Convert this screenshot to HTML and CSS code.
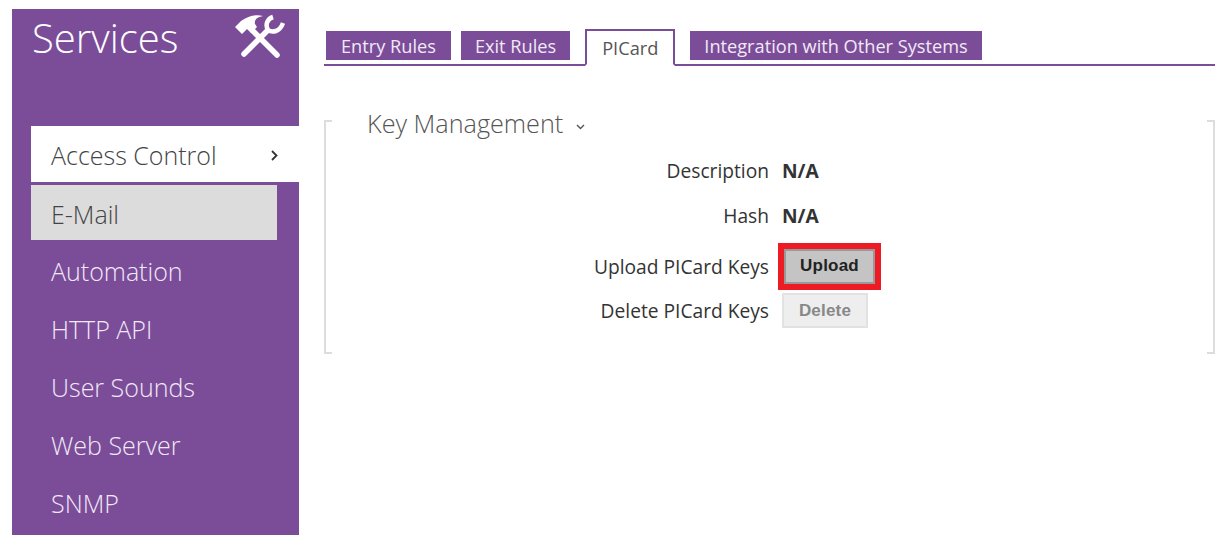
FILE: index.html
```html
<!DOCTYPE html>
<html lang="en">
<head>
  <meta charset="UTF-8" />
  <title>Services - PICard</title>
  <link rel="stylesheet" href="styles.css">
</head>
<body>

<div class="page">
  <aside class="sidebar">
    <div class="side-head">
      <h1>Services</h1>
      <svg class="tools" viewBox="-1 0 50 44" width="50" height="44">
        <path d="M8 40 L31 17" fill="none" stroke="#fff" stroke-width="5.5" stroke-linecap="round"/>
        <path d="M37 3 C31 5 29 11 32 16 C36 19 44 18 47 9" fill="none" stroke="#fff" stroke-width="4.5"/>
        <path d="M17 17 L41 41" fill="none" stroke="#fff" stroke-width="5.5" stroke-linecap="round"/>
        <path d="M-1 13 L5 7 C12 2 20 0 27 2 C21 3 18 6 19 10 L21 13 L15 19 L11 15 L6 20 Z" fill="#fff"/>
      </svg>
    </div>
    <nav class="side-nav">
      <a href="#" class="current">Access Control
        <svg class="chev-right" viewBox="0 0 7 11" width="7" height="11"><path d="M1 1 L5.5 5.5 L1 10" fill="none" stroke="#333" stroke-width="1.8"/></svg>
      </a>
      <a href="#" class="hover">E-Mail</a>
      <a href="#">Automation</a>
      <a href="#">HTTP API</a>
      <a href="#">User Sounds</a>
      <a href="#">Web Server</a>
      <a href="#">SNMP</a>
    </nav>
  </aside>

  <main class="content">
    <div class="tabs">
      <a href="#" class="tab">Entry Rules</a>
      <a href="#" class="tab tight">Exit Rules</a>
      <a href="#" class="tab active">PICard</a>
      <a href="#" class="tab tight">Integration with Other Systems</a>
    </div>

    <section class="panel">
      <h2>Key Management
        <svg class="chev-down" viewBox="0 0 9 6" width="9" height="6"><path d="M1 1 L4.5 4.5 L8 1" fill="none" stroke="#555" stroke-width="1.4"/></svg>
      </h2>
      <div class="field"><label>Description</label><strong>N/A</strong></div>
      <div class="field hash"><label>Hash</label><strong>N/A</strong></div>
      <div class="field upload">
        <label>Upload PICard Keys</label>
        <span class="highlight"><button class="btn">Upload</button></span>
      </div>
      <div class="field"><label>Delete PICard Keys</label><button class="btn disabled">Delete</button></div>
    </section>
  </main>
</div>

</body>
</html>
```

FILE: styles.css
```css
html, body {
  height: 100%;
}
body {
  font-family: 'Open Sans', 'Noto Sans', sans-serif;
  margin: 0;
  background: white;
  color: #333;
  overflow: hidden;
}
.page {
  display: flex;
  padding: 9px 0 0 12px;
}
.sidebar {
  width: 287px;
  height: 526px;
  flex: none;
  background: #7b4d99;
  color: #f1e9f5;
}
.side-head {
  display: flex;
  justify-content: space-between;
  height: 117px;
  padding: 0 14px 0 20px;
}
.side-head h1 {
  margin: 0;
  font-size: 40px;
  font-weight: 300;
  line-height: 58px;
  color: white;
}
.tools {
  margin-top: 5px;
}
.side-nav {
  display: flex;
  flex-direction: column;
  padding-left: 19px;
}
.side-nav a {
  display: flex;
  align-items: center;
  justify-content: space-between;
  height: 58px;
  padding: 0 21px 0 20px;
  color: inherit;
  text-decoration: none;
  font-size: 25px;
  font-weight: 300;
}
.side-nav a.current {
  height: 54px;
  padding-top: 2px;
  background: white;
  color: #444;
  margin-bottom: 3px;
}
.side-nav a.hover {
  height: 53px;
  width: 226px;
  padding-top: 2px;
  padding-right: 0;
  background: #dcdcdc;
  color: #444;
  margin-bottom: 2px;
}
.content {
  flex: 1;
  padding: 20px 16px 0 25px;
}
.tabs {
  display: flex;
  align-items: flex-end;
  height: 35px;
  padding-left: 2px;
  border-bottom: 2px solid #7b4d99;
}
.tab {
  display: flex;
  align-items: center;
  height: 29px;
  margin: 0 10px 4px 0;
  padding: 0 15px;
  background: #7b4d99;
  color: #f1e9f5;
  text-decoration: none;
  font-size: 18.2px;
}
.tab.tight {
  padding: 0 14px;
}
.tab.active {
  height: 33px;
  margin: 0 15px -2px 5px;
  padding: 0 15px;
  background: white;
  color: #555;
  border: 2px solid #7b4d99;
  border-bottom: 2px solid white;
}
/* corner ticks of the bracket are painted on the panel */
.panel {
  height: 234px;
  margin-top: 54px;
  border-left: 2px solid #ddd;
  border-right: 2px solid #ddd;
  background:
    linear-gradient(#ddd, #ddd) left top / 6px 2px no-repeat,
    linear-gradient(#ddd, #ddd) right top / 6px 2px no-repeat,
    linear-gradient(#ddd, #ddd) left bottom / 6px 2px no-repeat,
    linear-gradient(#ddd, #ddd) right bottom / 6px 2px no-repeat;
}
.panel h2 {
  margin: 0;
  padding-left: 41px;
  height: 32px;
  font-size: 25.2px;
  font-weight: 300;
  line-height: 6px;
  color: #555;
}
.chev-down {
  margin-left: 6px;
  vertical-align: 3px;
}
.field {
  display: flex;
  align-items: center;
  height: 37px;
  margin-bottom: 8px;
  font-size: 19.2px;
}
.field.upload {
  margin-bottom: 2px;
  height: 48px;
}
.field label {
  width: 443px;
  text-align: right;
  margin-right: 13px;
}
.field strong {
  font-weight: 700;
}
.btn {
  height: 35px;
  width: 86px;
  padding: 0;
  font-family: 'Liberation Sans', sans-serif;
  font-size: 17px;
  font-weight: 700;
  letter-spacing: 0.2px;
  color: #222;
  background: #c4c4c4;
  border: 2px solid #999;
}
.btn.disabled {
  background: #eee;
  color: #888;
  border-color: #e2e2e2;
}
.highlight {
  display: flex;
  margin-left: -4px;
  border: 6px solid #ed1c24;
}
.highlight .btn {
  width: 91px;
}
```
